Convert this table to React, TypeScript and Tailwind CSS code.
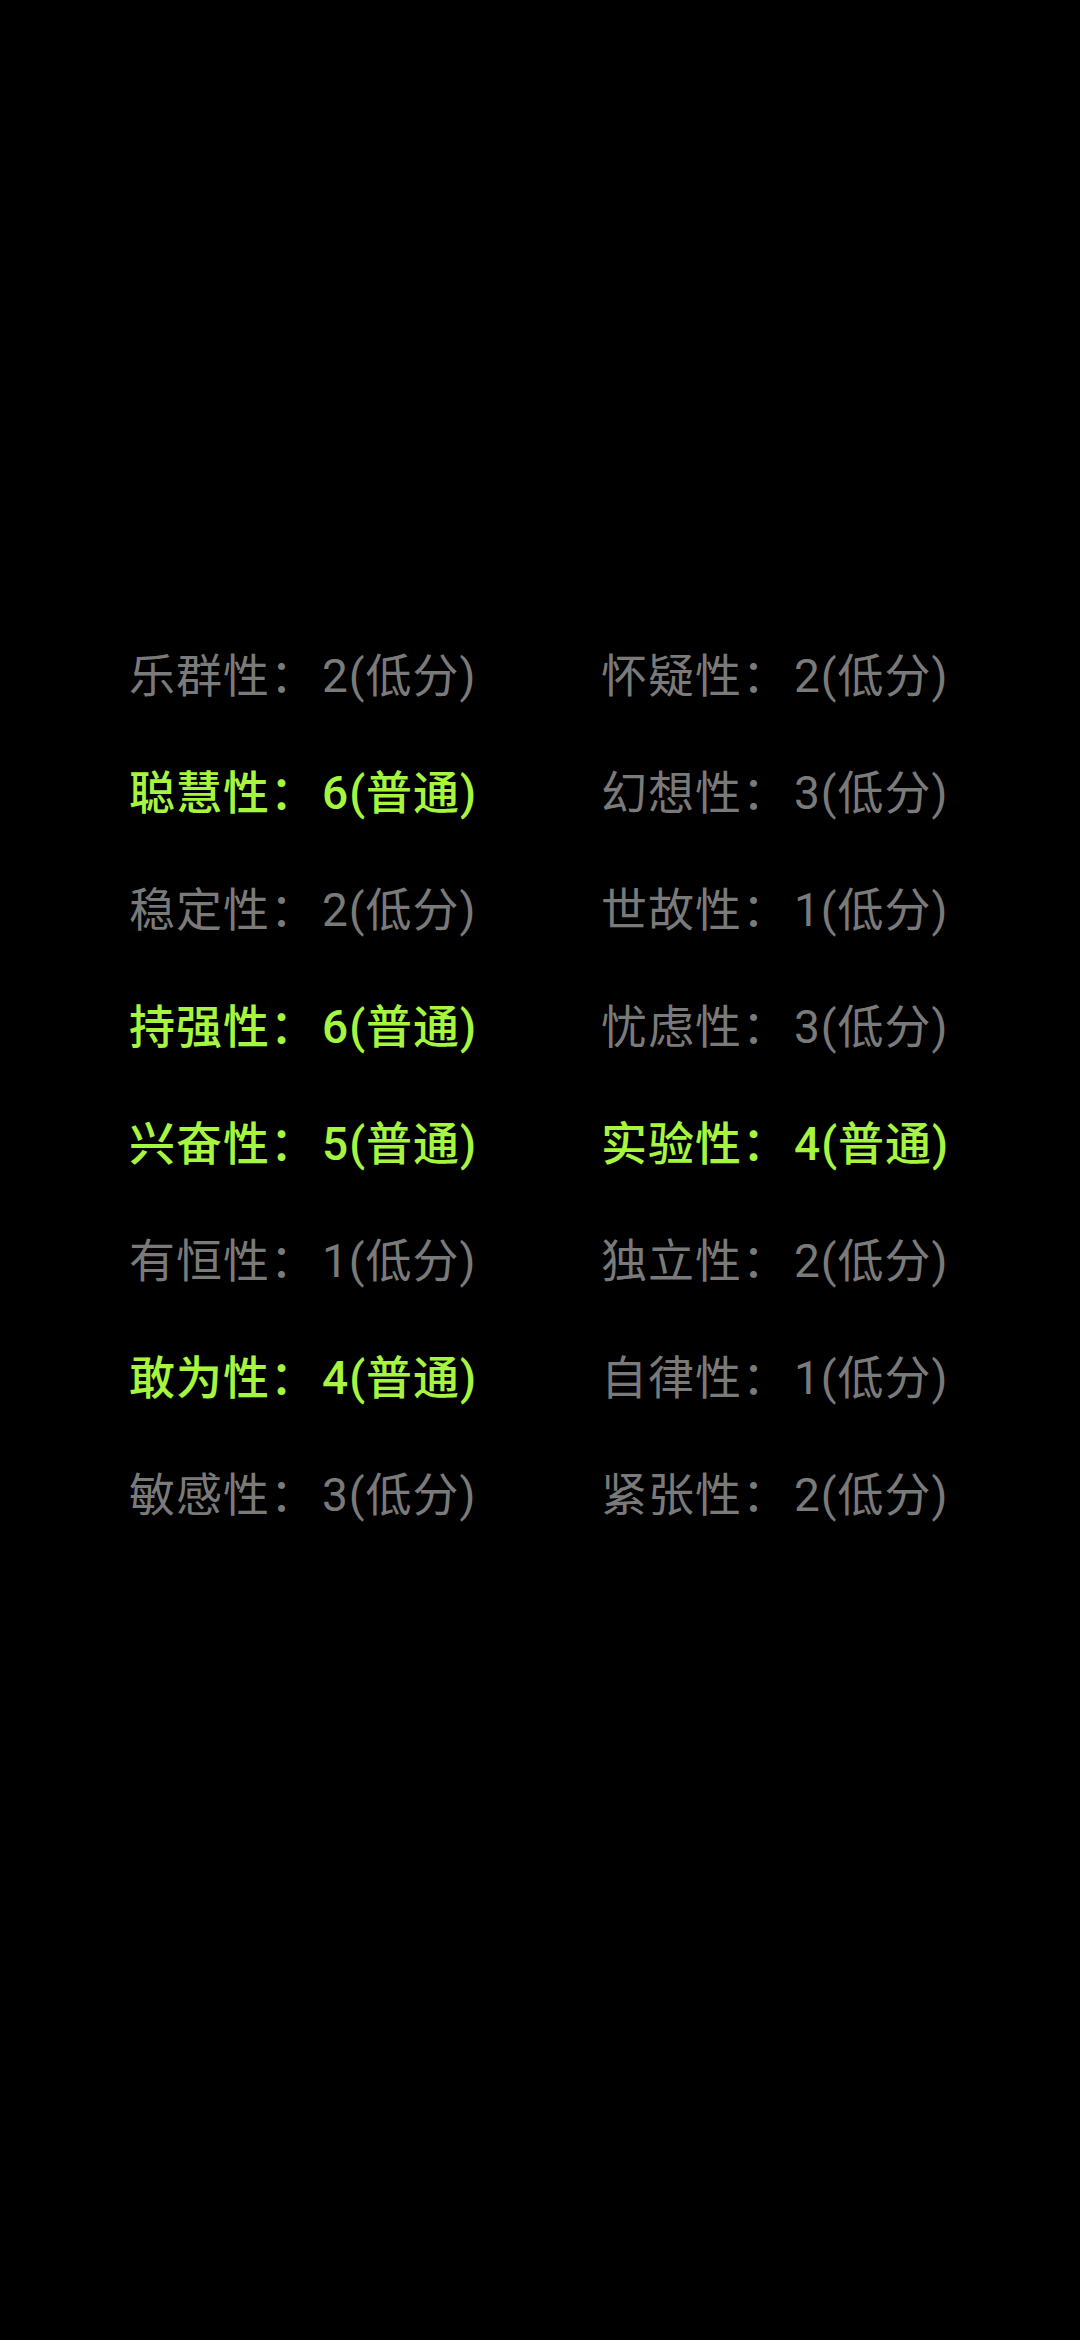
const traits = [
  ['乐群性', 2, false],
  ['怀疑性', 2, false],
  ['聪慧性', 6, true],
  ['幻想性', 3, false],
  ['稳定性', 2, false],
  ['世故性', 1, false],
  ['持强性', 6, true],
  ['忧虑性', 3, false],
  ['兴奋性', 5, true],
  ['实验性', 4, true],
  ['有恒性', 1, false],
  ['独立性', 2, false],
  ['敢为性', 4, true],
  ['自律性', 1, false],
  ['敏感性', 3, false],
  ['紧张性', 2, false],
] as const;

export default function App() {
  return (
    <div
      className="min-h-[2340px] w-[1080px] bg-black pt-[618px] pl-[129px]"
      style={{ fontFamily: 'Roboto, "Noto Sans CJK SC", sans-serif' }}
    >
      <div className="grid grid-cols-[472px_1fr]">
        {traits.map(([name, score, normal]) => (
          <div
            key={name}
            className={
              normal
                ? 'h-[117px] flex items-center text-[46px] tracking-[1px] font-medium text-[#a6f53e] whitespace-nowrap'
                : 'h-[117px] flex items-center text-[46px] tracking-[1px] font-normal text-[#7a7a7a] whitespace-nowrap'
            }
          >
            <span>{name}</span>
            <span className="w-[52px]">：</span>
            <span>
              {score}({normal ? '普通' : '低分'})
            </span>
          </div>
        ))}
      </div>
    </div>
  );
}
